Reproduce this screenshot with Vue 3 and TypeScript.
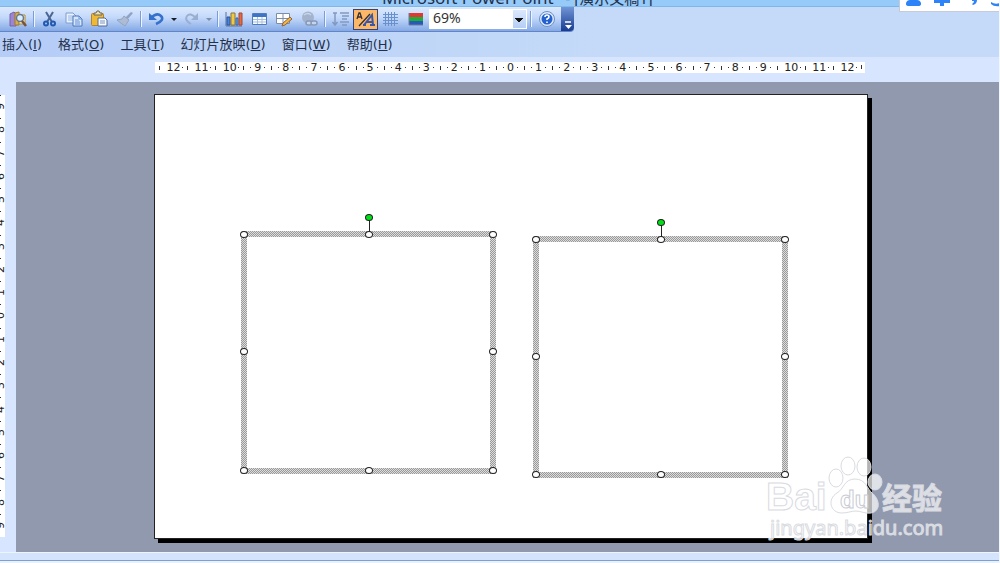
<script setup lang="ts">
import { ref } from 'vue'

interface Menu { label: string; key: string }
interface Shape { id: number; left: number; top: number; width: number; height: number }

const menus: Menu[] = [
  { label: '插入', key: 'I' },
  { label: '格式', key: 'O' },
  { label: '工具', key: 'T' },
  { label: '幻灯片放映', key: 'D' },
  { label: '窗口', key: 'W' },
  { label: '帮助', key: 'H' },
]

const horizontal = Array.from({ length: 25 }, (_, i) => Math.abs(i - 12))
const vertical = Array.from({ length: 19 }, (_, i) => Math.abs(i - 9))

// Slide objects, in percent of the slide's size
const shapes: Shape[] = [
  { id: 1, left: 12.1, top: 30.7, width: 35.8, height: 54.8 },
  { id: 2, left: 53.1, top: 31.8, width: 35.8, height: 54.6 },
]
const handles = ['nw', 'n', 'ne', 'e', 'se', 's', 'sw', 'w']

const zoom = ref('69%')
</script>

<template>
  <div class="window">
    <header class="title">Microsoft PowerPoint <span>- [演示文稿1]</span></header>

    <div class="ime" aria-hidden="true">
      <svg viewBox="0 0 100 11">
        <path d="M6 3Q7 0 10 0H17Q20 0 21 3V4Q21 6 18 6H9Q6 6 6 4Z" />
        <path d="M34 0H50V3H44V6H40V3H34Z" />
        <path d="M72 0H77Q77 4 73 5L72 4Q74 3 74 1H72Z" />
        <path d="M91 2Q95 5 100 3V6Q94 7 91 4Z" />
      </svg>
    </div>

    <div class="toolbar">
      <button class="tool" aria-label="信息检索">
        <svg viewBox="0 0 20 20"><path d="M2 5l4-2 2 2v12H2z" fill="#9b86cf" stroke="#7762aa" /><path d="M7 4l4-1v13H7z" fill="#dcae46" stroke="#9c7b35" /><path d="M11 6h6v9h-6z" fill="#fff2c8" stroke="#b58b3a" /><circle cx="12" cy="9" r="3.5" fill="#d8efff" stroke="#667890" stroke-width="1.5" /><path d="M14 12l4 5" stroke="#775437" stroke-width="2.5" /></svg>
      </button>
      <i class="sep"></i>
      <button class="tool" aria-label="剪切">
        <svg viewBox="0 0 20 20"><path d="M6 3l6 10M13 3L7 13" stroke="#496694" stroke-width="2" fill="none" /><circle cx="6" cy="14.500" r="2" fill="none" stroke="#2259b3" stroke-width="2" /><circle cx="13" cy="14.500" r="2" fill="none" stroke="#2259b3" stroke-width="2" /></svg>
      </button>
      <button class="tool" aria-label="复制">
        <svg viewBox="0 0 20 20"><path d="M1 4h7l3 3v7H1z" fill="#e7f1ff" stroke="#7e9dcd" /><path d="M3 7h5M3 9h5M3 11h5" stroke="#94b6e4" /><path d="M8 7h6l3 3v7H8z" fill="#d4e7ff" stroke="#4d74b6" /><path d="M14 7v3h3M10 11h4M10 13h5M10 15h5" fill="none" stroke="#6a91d3" /></svg>
      </button>
      <button class="tool" aria-label="粘贴">
        <svg viewBox="0 0 20 20"><rect x="1.500" y="4.500" width="12" height="12" rx="1" fill="#efb938" stroke="#b8802b" /><path d="M4 6V4h2l1-2h2l1 2h2v2z" fill="#e7dfb5" stroke="#71654a" /><path d="M8 9h7l2 2v6H8z" fill="#f7faff" stroke="#526b95" /><path d="M10 12h5M10 14h5" stroke="#7c94bd" /></svg>
      </button>
      <button class="tool" aria-label="格式刷">
        <svg viewBox="0 0 20 20"><path d="M16 3l2 1-6 7-2-2z" fill="#8da2c4" /><path d="M9 7l5 4-4 6-3-2-5-4 5-1z" fill="#adbbd3" stroke="#93a5c2" /></svg>
      </button>
      <i class="sep"></i>
      <button class="tool" aria-label="撤消">
        <svg viewBox="0 0 20 20"><path d="M4 9Q10 3 14 7T9 15" fill="none" stroke="#3471cd" stroke-width="2.500" /><path d="M2 4v7h8z" fill="#3471cd" /></svg>
      </button>
      <button class="caret" aria-label="撤消列表"></button>
      <button class="tool" aria-label="恢复">
        <svg viewBox="0 0 20 20"><path d="M14 9Q8 3 5 7T9 15" fill="none" stroke="#9aafcf" stroke-width="2" /><path d="M16 4v7H9z" fill="#9aafcf" /></svg>
      </button>
      <button class="caret muted" aria-label="恢复列表"></button>
      <i class="sep"></i>
      <button class="tool" aria-label="插入图表">
        <svg viewBox="0 0 20 20"><path d="M2 3v14h16" fill="none" stroke="#5b7299" /><path d="M3 8h3v8H3z" fill="#4a83db" stroke="#2855a1" /><path d="M7 4h4v12H7z" fill="#f1c941" stroke="#8b733b" /><path d="M12 9h2v7h-2z" fill="#67a9e8" stroke="#3566ad" /><path d="M15 4h3v12h-3z" fill="#ea6943" stroke="#9b4936" /></svg>
      </button>
      <button class="tool" aria-label="插入表格">
        <svg viewBox="0 0 20 20"><path d="M3.500 4.500h14v11h-14z" fill="#f8fbff" stroke="#537bb7" /><path d="M4 5h13v3H4z" fill="#3e74c5" /><path d="M8.500 8v7M13 8v7M4 10.500h13M4 13h13" stroke="#a5bfdf" /></svg>
      </button>
      <button class="tool" aria-label="表格和边框">
        <svg viewBox="0 0 20 20"><path d="M2.500 4.500h13v10h-13z" fill="#fff" stroke="#7c8da9" /><path d="M9 5v9M3 9.500h12" stroke="#7c8da9" /><path d="M16 8l2 2-7 6-3 1 1-3z" fill="#f2b643" stroke="#92643b" /></svg>
      </button>
      <button class="tool" aria-label="插入超链接">
        <svg viewBox="0 0 20 20"><circle cx="9" cy="8.500" r="6" fill="#a4b3cd" /><path d="M5 6q4-3 7 0" fill="none" stroke="#c9d5e8" stroke-width="1.500" /><rect x="7" y="12" width="6" height="4" rx="2" fill="#c5d4ed" stroke="#8698b9" stroke-width="1.500" /><rect x="12" y="12" width="6" height="4" rx="2" fill="#c5d4ed" stroke="#8698b9" stroke-width="1.500" /></svg>
      </button>
      <i class="sep"></i>
      <button class="tool" aria-label="全部展开">
        <svg viewBox="0 0 20 20"><path d="M4 4v12M1.500 13L4 16l2.500-3M2 4h4M9 4h9M11 7h7M11 10h5M9 13h9M11 16h5" fill="none" stroke="#8299c0" stroke-width="1.500" /></svg>
      </button>
      <button class="tool pressed" aria-label="显示格式" aria-pressed="true">
        <svg viewBox="0 0 20 20"><path d="M1 9l2-6h1l2 6M2 7h3M3 16L14 4" fill="none" stroke="#343039" stroke-width="1.300" /><path d="M8 15l8-10 1 10M11 12h6M7 15h3M14 15h5" fill="none" stroke="#3857a8" stroke-width="2" /></svg>
      </button>
      <button class="tool" aria-label="显示网格">
        <svg viewBox="0 0 20 20"><path d="M4.500 3v14M7.500 3v14M10.500 3v14M13.500 3v14M2 5.500h15M2 8.500h15M2 11.500h15M2 14.500h15" stroke="#6790cc" /></svg>
      </button>
      <button class="tool" aria-label="颜色/灰度">
        <svg viewBox="0 0 20 20"><path d="M3 4h14v4H3z" fill="#df3931" /><path d="M3 8h14v4H3z" fill="#20ad37" /><path d="M3 12h14v4H3z" fill="#2859b6" /><path d="M3 4v12h14" fill="none" stroke="#697ca0" /></svg>
      </button>
      <select v-model="zoom" class="zoom" aria-label="显示比例">
        <option>69%</option>
      </select>
      <i class="sep"></i>
      <button class="tool" aria-label="帮助">
        <svg viewBox="0 0 20 20"><circle cx="10" cy="10" r="7.500" fill="#dceaff" stroke="#718fbe" /><circle cx="10" cy="10" r="5.500" fill="#2561cf" /><path d="M8 8Q8 6 10 6t2 2q0 1-2 2v1M10 12.500v1.500" fill="none" stroke="#fff" stroke-width="1.600" /></svg>
      </button>
      <button class="overflow" aria-label="工具栏选项">
        <svg viewBox="0 0 12 12"><path d="M4 3h6" stroke="#fff" stroke-width="1.500" /><path d="M4 6h7l-3.500 4z" fill="#fff" /></svg>
      </button>
    </div>

    <nav class="menus">
      <button v-for="m in menus" :key="m.key" class="menu">{{ m.label }}(<u>{{ m.key }}</u>)</button>
    </nav>

    <div class="ruler-row">
      <div class="ruler">
        <span v-for="(n, i) in horizontal" :key="i" class="mark" :class="{ wide: n > 9 }">{{ n }}</span>
      </div>
    </div>

    <main class="editor">
      <div class="side">
        <div class="side-ruler">
          <span v-for="(n, i) in vertical" :key="i" class="side-mark"><b>{{ n }}</b></span>
        </div>
      </div>
      <div class="desk">
        <section class="slide" aria-label="幻灯片">
          <div
            v-for="s in shapes"
            :key="s.id"
            class="shape"
            :style="{ left: s.left + '%', top: s.top + '%', width: s.width + '%', height: s.height + '%' }"
          >
            <div class="fill"></div>
            <i class="stem"></i>
            <i class="handle rotate"></i>
            <i v-for="h in handles" :key="h" class="handle" :class="h"></i>
          </div>
        </section>
        <svg class="watermark" viewBox="0 0 190 90" role="img" aria-label="Baidu 经验">
          <g class="logo">
            <text x="2" y="56" class="latin">Bai</text>
            <ellipse cx="72" cy="24" rx="7" ry="9" />
            <ellipse cx="84" cy="12" rx="7" ry="9" />
            <ellipse cx="100" cy="13" rx="7" ry="9" />
            <ellipse cx="111" cy="28" rx="7" ry="8" />
            <path d="M91 25C80 25 80 35 73 39C63 45 66 59 78 59C84 59 87 57 92 57C97 57 101 60 107 59C118 57 115 44 108 39C103 35 102 25 91 25Z" />
            <text x="76" y="54" class="du">du</text>
            <text x="118" y="55" class="hanzi">经验</text>
            <text x="6" y="81" class="site">jingyan.baidu.com</text>
          </g>
        </svg>
      </div>
    </main>
    <footer class="status"></footer>
  </div>
</template>

<style>
body { margin: 0; }
</style>

<style scoped>
* { box-sizing: border-box; }
.window {
  position: relative;
  display: flex;
  flex-direction: column;
  height: 100vh;
  overflow: hidden;
  border-right: 1px solid #f2f6fd;
  background: linear-gradient(90deg, #b5cdf7, #c4daf8 60%) 0 0 / 100% 57px no-repeat #d7e6fe;
  color: #24304a;
  font-family: "Noto Sans", "Noto Sans CJK SC", sans-serif;
}
button { padding: 0; border: 0; background: none; color: inherit; font: inherit; }
.title {
  display: flex;
  align-items: flex-end;
  gap: 12px;
  flex: none;
  height: 7px;
  padding-left: 382px;
  overflow: hidden;
  border-bottom: 1px solid #80b7e9;
  background: #95caf9;
  font-size: 17px;
  line-height: 16px;
  white-space: nowrap;
}
.title span { font-size: 15px; }
.ime {
  position: absolute;
  top: 0;
  right: 0;
  width: 100px;
  height: 12px;
  border: solid #c5cbd6;
  border-width: 0 0 1px 1px;
  background: #fff;
}
.ime svg { display: block; width: 100px; height: 11px; fill: #2d83f7; }
.toolbar {
  display: flex;
  align-items: center;
  align-self: flex-start;
  flex: none;
  height: 25px;
  padding-left: 5px;
  border-bottom: 1px solid #6385c8;
  border-radius: 0 0 4px 0;
  background: linear-gradient(#dce9fd, #c2d8fa 45%, #84a9e5);
}
.tool { display: grid; place-items: center; width: 25px; height: 21px; }
.tool svg { width: 20px; height: 20px; }
.pressed { border: 1px solid #33437f; background: #fcb867; }
.sep { width: 2px; height: 16px; margin: 0 2px 0 3px; border-left: 1px solid #7a9cd8; background: #eef5ff; }
.caret { display: grid; place-items: center; width: 10px; height: 20px; }
.caret::after { content: ""; border: 3px solid transparent; border-top-color: #151b28; border-bottom: 0; }
.muted::after { border-top-color: #7e8da8; }
.zoom {
  width: 98px;
  height: 20px;
  margin-left: 1px;
  padding: 0 0 2px 4px;
  appearance: none;
  border: 0;
  border-radius: 0;
  background:
    conic-gradient(from 315deg at 50% 100%, #111 90deg, transparent 0) right 4px top 9px / 8px 4px no-repeat,
    linear-gradient(#dbe8fd, #b5cef4) right 1px top 1px / 13px 18px no-repeat,
    #fff;
  color: #333;
  font: 14px/18px "Noto Sans", sans-serif;
}
.overflow {
  display: flex;
  align-items: flex-end;
  width: 13px;
  height: 24px;
  margin-left: 2px;
  border-radius: 0 0 4px 0;
  background: linear-gradient(#7195d5, #183c91);
}
.overflow svg { width: 12px; height: 12px; }
.menus { display: flex; gap: 16px; flex: none; height: 25px; padding-left: 2px; }
.menu { font: 13px/24px "DejaVu Sans", "Noto Sans CJK SC", sans-serif; white-space: nowrap; }
.ruler-row { flex: none; height: 25px; padding: 5px 134px 0 155px; }
.ruler {
  position: relative;
  display: grid;
  grid-template-columns: repeat(25, 1fr);
  height: 11px;
  padding: 0 4px;
  background: #fff;
}
.ruler::after, .mark::before {
  content: "";
  width: 1px;
  height: 4px;
  background: #333;
}
.ruler::after { position: absolute; top: 3px; right: 3px; }
.mark {
  display: flex;
  align-items: center;
  justify-content: space-between;
  color: #222;
  font: 11px/11px "DejaVu Sans", sans-serif;
  background:
    linear-gradient(#333, #333) 7px 5px / 1px 1px no-repeat,
    linear-gradient(#333, #333) 21px 5px / 1px 1px no-repeat;
}
.mark::after { content: ""; width: 0; }
.wide { background: linear-gradient(#333, #333) 23px 5px / 1px 1px no-repeat; }
.editor { display: flex; flex: 1; min-height: 0; }
.side { flex: none; width: 16px; padding: 13px 0 15px; }
.side-ruler { display: grid; grid-template-rows: repeat(19, 1fr); width: 5px; height: 100%; overflow: hidden; background: #fff; }
.side-mark {
  display: flex;
  align-items: center;
  min-height: 0;
  background: linear-gradient(#333, #333) 0 0 / 1px 1px no-repeat;
}
.side-mark b { margin-left: -3px; color: #222; font: 11px/11px "DejaVu Sans", sans-serif; transform: rotate(-90deg); }
.desk { position: relative; display: flex; flex: 1; padding: 12px 131px 13px 138px; background: #9199ae; }
.slide {
  position: relative;
  flex: 1;
  border: 1px solid #222;
  background: #fff;
  box-shadow: 4px 4px 0 #000;
}
.shape {
  position: absolute;
  padding: 6px;
  background: repeating-conic-gradient(#999 0 25%, #dcdcdc 0 50%) 0 0 / 2px 2px;
}
.fill { height: 100%; background: #fff; }
.handle {
  position: absolute;
  width: 8px;
  height: 7px;
  border: 1px solid #222;
  border-radius: 50%;
  background: #fff;
}
.nw, .n, .ne { top: 0; }
.sw, .s, .se { bottom: 0; }
.nw, .w, .sw { left: -1px; }
.ne, .e, .se { right: -1px; }
.n, .s, .rotate, .stem { left: calc(50% - 4px); }
.w, .e { top: calc(50% - 4px); }
.rotate { top: -17px; background: #00e016; }
.stem { position: absolute; top: -12px; width: 5px; height: 14px; border-right: 1px solid #222; }
.watermark { position: absolute; right: 45px; bottom: 8px; width: 190px; height: 90px; }
.logo { fill: #fff; fill-opacity: 0.7; stroke: #d9dbe1; stroke-width: 1px; }
.latin { font: bold 39px "Liberation Sans", sans-serif; }
.du { font: bold 24px "Liberation Sans", sans-serif; stroke: #c9ccd4; }
.hanzi { font: bold 30px "Noto Sans CJK SC", sans-serif; }
.site { font: 20px "Noto Sans", sans-serif; }
.status { flex: none; height: 11px; border-top: 1px solid #eef5ff; background: linear-gradient(#d3e4fc 7px, #7f9fd1 7px 8px, #e8f1ff 8px); }
</style>
